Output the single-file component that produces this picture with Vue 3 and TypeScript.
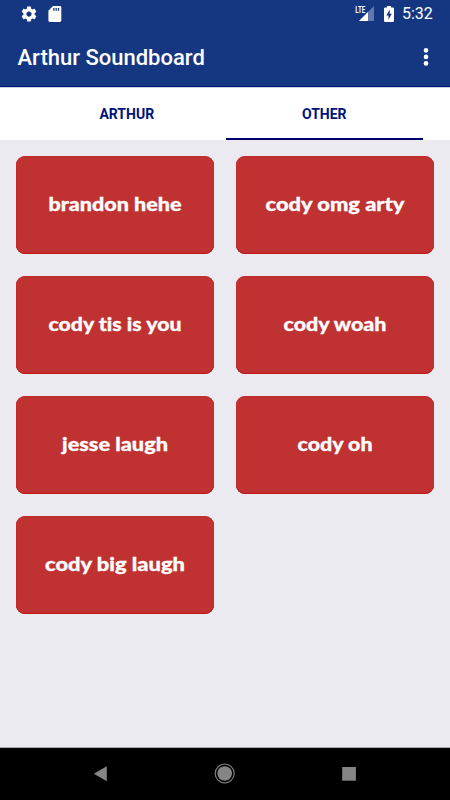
<script setup lang="ts">
interface Sound {
  label: string
  width: number
}

const tabs = ['ARTHUR', 'OTHER']
const activeTab = 'OTHER'

const sounds: Sound[] = [
  { label: 'brandon hehe', width: 133 },
  { label: 'cody omg arty', width: 139 },
  { label: 'cody tis is you', width: 133 },
  { label: 'cody woah', width: 103 },
  { label: 'jesse laugh', width: 106 },
  { label: 'cody oh', width: 75 },
  { label: 'cody big laugh', width: 140 },
]
</script>

<template>
  <div class="screen">
    <header class="header">
      <div class="status">
        <svg class="gear" width="18" height="18" viewBox="0 0 24 24" fill="#fff">
          <path d="M19.43 12.98c.04-.32.07-.64.07-.98s-.03-.66-.07-.98l2.11-1.65c.19-.15.24-.42.12-.64l-2-3.46c-.12-.22-.39-.3-.61-.22l-2.49 1c-.52-.4-1.08-.73-1.69-.98l-.38-2.65C14.46 2.18 14.25 2 14 2h-4c-.25 0-.46.18-.49.42l-.38 2.65c-.61.25-1.17.59-1.69.98l-2.49-1c-.23-.09-.49 0-.61.22l-2 3.46c-.13.22-.07.49.12.64l2.11 1.65c-.04.32-.07.65-.07.98s.03.66.07.98l-2.11 1.65c-.19.15-.24.42-.12.64l2 3.46c.12.22.39.3.61.22l2.49-1c.52.4 1.08.73 1.69.98l.38 2.65c.03.24.24.42.49.42h4c.25 0 .46-.18.49-.42l.38-2.65c.61-.25 1.17-.59 1.69-.98l2.49 1c.23.09.49 0 .61-.22l2-3.46c.12-.22.07-.49-.12-.64l-2.11-1.65zM12 15.5c-1.93 0-3.5-1.57-3.5-3.5s1.57-3.5 3.5-3.5 3.5 1.57 3.5 3.5-1.57 3.5-3.5 3.5z" />
        </svg>
        <svg class="sdcard" width="14" height="16" viewBox="0 0 14 16">
          <path d="M5 0H12Q13.3 0 13.3 1.4V14.6Q13.3 16 12 16H1.8Q.4 16 .4 14.6V4.8Z" fill="#fff" />
          <path d="M5.9 2V4.7M8.2 2V4.7M10.5 2V4.7" stroke="#153782" stroke-width="1.3" />
        </svg>
        <span class="spacer"></span>
        <svg width="20" height="17" viewBox="0 0 20 17">
          <path d="M19 1V16H4Z" fill="#6379ad" />
          <path d="M13 7V16H4Z" fill="#fff" />
          <path d="M0 0H11V8H0Z" fill="#153782" />
          <text class="lte" x="0.3" y="8" textLength="10" lengthAdjust="spacingAndGlyphs">LTE</text>
        </svg>
        <svg class="battery" width="10" height="16" viewBox="0 0 10 16">
          <path d="M3 0H7V1.6H8.8Q10 1.6 10 2.8V14.8Q10 16 8.8 16H1.2Q0 16 0 14.8V2.8Q0 1.6 1.2 1.6H3Z" fill="#fff" />
          <path d="M5.7 3.6L2.3 9.4H4.5V13.7L7.8 7.8H5.7Z" fill="#153782" />
        </svg>
        <span class="clock">5:32</span>
      </div>
      <div class="toolbar">
        <h1 class="title">Arthur Soundboard</h1>
        <svg class="more" width="6" height="20" viewBox="0 0 6 20" fill="#fff">
          <circle cx="3" cy="3.4" r="2.3" />
          <circle cx="3" cy="9.9" r="2.3" />
          <circle cx="3" cy="16.4" r="2.3" />
        </svg>
      </div>
    </header>

    <nav class="tabs">
      <div v-for="tab in tabs" :key="tab" class="tab" :class="{ active: tab === activeTab }">{{ tab }}</div>
    </nav>

    <main class="grid">
      <button v-for="sound in sounds" :key="sound.label" class="sound">
        <svg width="198" height="98" viewBox="0 0 198 98">
          <text class="label" x="99" y="55" text-anchor="middle" :textLength="sound.width" lengthAdjust="spacingAndGlyphs">{{ sound.label }}</text>
        </svg>
      </button>
    </main>

    <footer class="navbar">
      <svg width="450" height="52" viewBox="0 0 450 52" fill="#858585">
        <path d="M93.8 25.7L106.8 18.2V33.2Z" />
        <circle cx="224.7" cy="25.5" r="7.3" />
        <circle cx="224.7" cy="25.5" r="9.5" fill="none" stroke="#858585" stroke-width="1.1" />
        <rect x="342.2" y="19" width="13.7" height="13.7" />
      </svg>
    </footer>
  </div>
</template>

<style>
body {
  margin: 0;
}
</style>

<style scoped>
.screen {
  width: 450px;
  height: 800px;
  display: flex;
  flex-direction: column;
  background: #ebeaf0;
  font-family: Roboto, sans-serif;
  overflow: hidden;
}

.header {
  box-sizing: border-box;
  height: 87px;
  background: #153782;
  border-bottom: 1px solid #001673;
  color: #fff;
}

.status {
  display: flex;
  align-items: center;
  height: 27px;
  padding: 0 18px 0 19.5px;
}

.sdcard {
  margin-left: 10px;
}

.spacer {
  flex: 1;
}

.lte {
  font: 700 9px Roboto, sans-serif;
  fill: #fff;
}

.battery {
  margin-left: 9px;
}

.clock {
  width: 30px;
  margin-left: 8px;
  font-size: 16px;
  line-height: 28px;
  white-space: nowrap;
}

.toolbar {
  display: flex;
  align-items: center;
  justify-content: space-between;
  height: 60px;
  padding: 0 21px 0 17.5px;
}

.title {
  margin: 0;
  padding-top: 2px;
  font-size: 22px;
  font-weight: 500;
  line-height: 30px;
}

.tabs {
  box-sizing: border-box;
  display: flex;
  height: 53px;
  padding: 0 27px 0 28px;
  border-top: 1px solid #c9d2e3;
  background: #fff;
}

.tab {
  box-sizing: border-box;
  flex: 1;
  border-bottom: 2px solid transparent;
  color: #02127a;
  font-size: 14px;
  font-weight: 700;
  line-height: 53px;
  text-align: center;
}

.tab.active {
  border-bottom-color: #02006f;
}

.grid {
  flex: 1;
  display: grid;
  grid-template-columns: 198px 198px;
  grid-auto-rows: 98px;
  gap: 22px;
  align-content: start;
  padding: 16px 16px 0;
}

.sound {
  display: block;
  padding: 0;
  border: 0;
  border-radius: 9px;
  background: #c03232;
  box-shadow: inset 0 -1px #c1191d, inset 0 0 0 1px #c12d2f;
}

.sound svg {
  display: block;
}

.label {
  font: 900 19px Lato, sans-serif;
  font-variant-ligatures: none;
  fill: #fff;
  stroke: #fff;
  stroke-width: 0.3px;
}

.navbar {
  height: 52px;
  border-top: 1px solid #aaa9ad;
  background: #000;
}

.navbar svg {
  display: block;
}
</style>
